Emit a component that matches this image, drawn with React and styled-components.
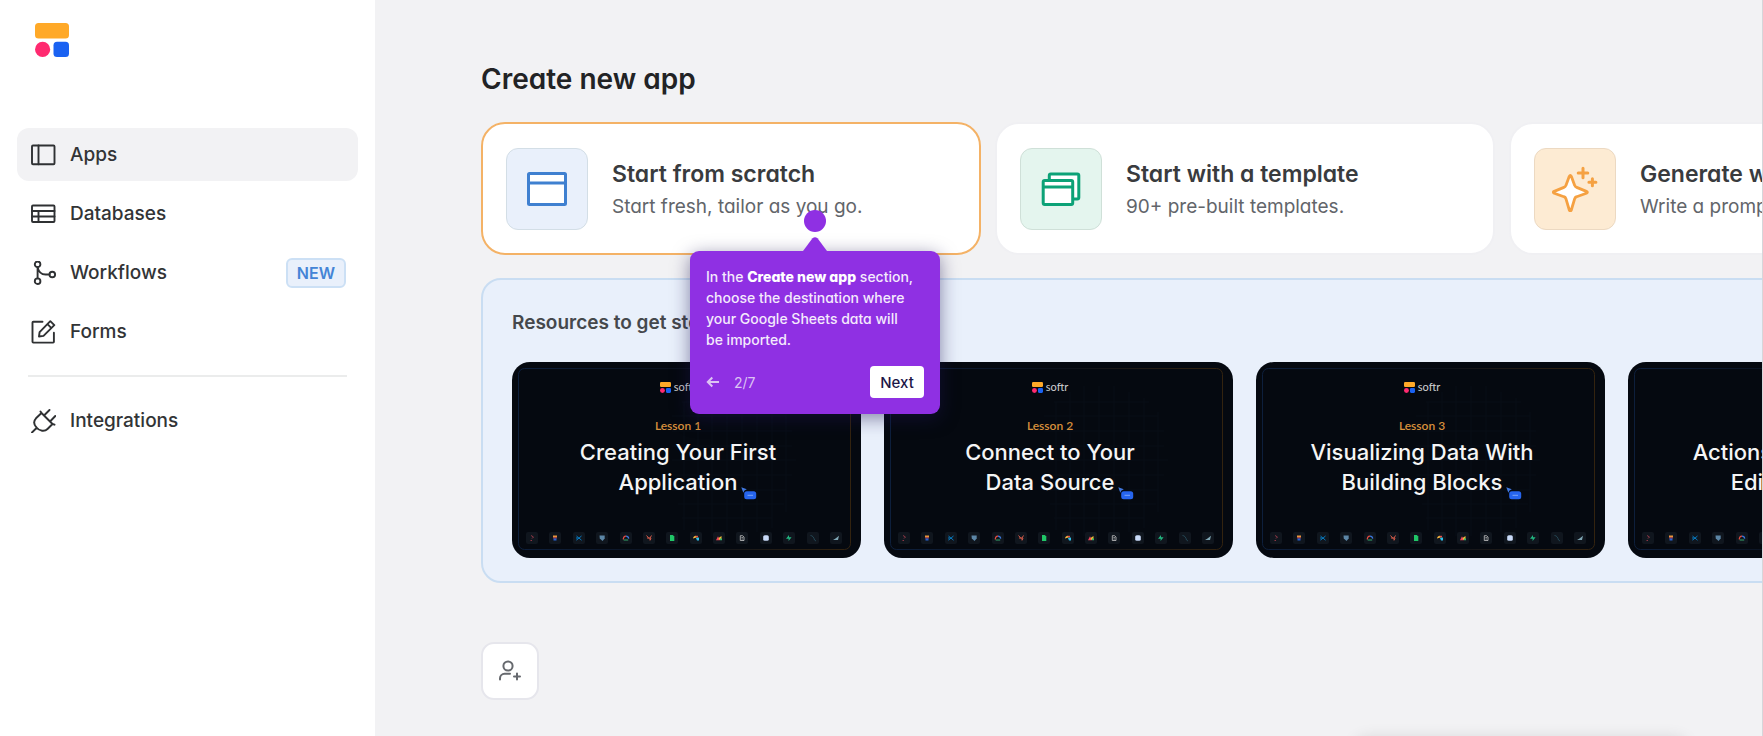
import React from "react";
import styled, { createGlobalStyle } from "styled-components";

const GlobalStyle = createGlobalStyle`
  * {
    box-sizing: border-box;
  }
  body {
    margin: 0;
    background: #f2f2f4;
    font-family: Inter, "Liberation Sans", sans-serif;
    color: #2f3133;
    overflow: hidden;
  }
  button {
    font: inherit;
    color: inherit;
    cursor: pointer;
  }
  svg {
    display: block;
    flex: none;
  }
`;

const Page = styled.div`
  display: flex;
  min-height: 100vh;
  border-right: 1px solid #d6d6da;
`;

const Sidebar = styled.aside`
  flex: none;
  width: 375px;
  padding: 23px 17px 24px;
  background: #fff;
`;

const LogoLink = styled.a`
  display: block;
  width: 34px;
  margin: 0 0 71px 18px;
`;

const Nav = styled.nav`
  display: flex;
  flex-direction: column;
  gap: 6px;
`;

const NavItem = styled.a`
  display: flex;
  align-items: center;
  gap: 14px;
  height: 53px;
  padding: 0 12px 0 14px;
  border-radius: 12px;
  background: ${(p) => (p.$active ? "#f2f2f4" : "transparent")};
  color: #323436;
  font-size: 19px;
  font-weight: 500;
  text-decoration: none;
`;

const Badge = styled.span`
  margin-left: auto;
  padding: 0 9px;
  border: 2px solid #cce0f5;
  border-radius: 6px;
  background: #e9f0fb;
  color: #4484d6;
  font-size: 16px;
  font-weight: 600;
  line-height: 26px;
`;

const Divider = styled.hr`
  width: auto;
  height: 2px;
  margin: 11px;
  border: none;
  background: #ebecec;
`;

const Main = styled.main`
  flex: 1;
  min-width: 0;
  padding: 57px 0 36px 106px;
  overflow: hidden;
  font-feature-settings: "cv11";
`;

const Title = styled.h1`
  margin: 0 0 21px;
  color: #222325;
  font-size: 28px;
  font-weight: 600;
  line-height: 44px;
`;

const StartRow = styled.div`
  display: flex;
  gap: 14px;
  margin-bottom: 23px;
`;

const StartSlot = styled.div`
  position: relative;
  flex: 0 0 500px;
`;

const StartCard = styled.button`
  display: flex;
  align-items: center;
  gap: 24px;
  width: 100%;
  height: 133px;
  padding: 0 23px;
  border: 2px solid ${(p) => (p.$selected ? "#f4b266" : "#f0f0f3")};
  border-radius: 24px;
  background: #fff;
  text-align: left;
`;

const Tile = styled.span`
  display: flex;
  align-items: center;
  justify-content: center;
  flex: none;
  width: 82px;
  height: 82px;
  border: 1px solid ${(p) => p.$line};
  border-radius: 12px;
  background: ${(p) => p.$fill};
`;

const StartText = styled.span`
  display: flex;
  flex-direction: column;
  padding-top: 2px;
  white-space: nowrap;
`;

const StartName = styled.span`
  color: #393b3e;
  font-size: 23px;
  font-weight: 600;
  line-height: 34px;
`;

const StartNote = styled.span`
  color: #62656a;
  font-size: 19px;
  line-height: 32px;
`;

const Resources = styled.section`
  width: 1530px;
  padding: 28px 29px 23px;
  border: 2px solid #c9ddf2;
  border-radius: 20px;
  background: #e9f0fb;
`;

const ResourcesTitle = styled.h2`
  margin: 0 0 24px;
  color: #45484c;
  font-size: 19px;
  font-weight: 600;
  line-height: 30px;
`;

const Lessons = styled.div`
  display: flex;
  gap: 23px;
`;

const Lesson = styled.a`
  position: relative;
  display: flex;
  flex-direction: column;
  flex: 0 0 349px;
  height: 196px;
  padding: 18px 19px 14px 14px;
  border-radius: 18px;
  background: #050910;
  color: #f5f5f5;
  font-feature-settings: normal;
  text-decoration: none;
  overflow: hidden;
`;

const LessonBackdrop = styled.svg`
  position: absolute;
  inset: 0;
`;

const LessonHead = styled.span`
  position: relative;
  display: flex;
  flex-direction: column;
  align-items: center;
  padding-right: 12px;
`;

const Brand = styled.span`
  display: flex;
  align-items: center;
  gap: 3px;
  color: #d0d1d3;
  font-family: Lato, sans-serif;
  font-size: 11px;
  line-height: 14px;
`;

const LessonNumber = styled.span`
  margin-top: 23px;
  color: #d8903c;
  font-family: Lato, sans-serif;
  font-size: 12px;
  font-weight: 600;
  line-height: 18px;
`;

const LessonTitle = styled.strong`
  margin-top: 2px;
  font-size: 22px;
  font-weight: 500;
  line-height: 30px;
  text-align: center;
  white-space: nowrap;
`;

const LastLine = styled.span`
  position: relative;
`;

const Cursor = styled.svg`
  position: absolute;
  left: calc(100% + 4px);
  bottom: -5px;
`;

const Sources = styled.span`
  position: relative;
  display: flex;
  justify-content: space-between;
  margin-top: auto;
`;

const Invite = styled.button`
  display: flex;
  align-items: center;
  justify-content: center;
  width: 58px;
  height: 58px;
  margin-top: 59px;
  padding: 0;
  border: 2px solid #e6e6ec;
  border-radius: 13px;
  background: #fff;
`;

/* bottom panel that sits just under the fold, only its shadow shows */
const Drawer = styled.div`
  position: fixed;
  right: 76px;
  bottom: -42px;
  width: 332px;
  height: 40px;
  border-radius: 12px;
  background: #fff;
  box-shadow: 0 0 16px rgba(0, 0, 0, 0.12);
`;

const Dot = styled.span`
  position: absolute;
  z-index: 3;
  top: 88px;
  left: 323px;
  width: 22px;
  height: 22px;
  border-radius: 50%;
  background: #8f30e3;
`;

const Tip = styled.div`
  position: absolute;
  z-index: 3;
  top: 129px;
  left: 209px;
  width: 250px;
  padding: 15px 16px 16px;
  border-radius: 9px;
  background: #8f30e3;
  box-shadow: 0 4px 18px rgba(26, 20, 80, 0.5);
  color: #f4eafc;
  font-size: 14px;
`;

const TipArrow = styled.svg`
  position: absolute;
  top: -14px;
  left: 113px;
`;

const TipText = styled.p`
  margin: 0;
  font-weight: 500;
  line-height: 21px;
  white-space: nowrap;

  b {
    color: #fff;
    font-weight: 800;
  }
`;

const TipFooter = styled.div`
  display: flex;
  align-items: center;
  margin-top: 16px;
`;

const BackButton = styled.button`
  padding: 0;
  border: none;
  background: none;
`;

const Step = styled.span`
  margin-left: 14px;
  color: #dcc3f3;
`;

const NextButton = styled.button`
  width: 54px;
  height: 32px;
  margin-left: auto;
  padding: 0;
  border: none;
  border-radius: 4px;
  background: #fff;
  color: #1d1647;
  font-size: 15px;
  font-weight: 500;
`;

function SoftrMark({ size }) {
  return (
    <svg width={size} height={size} viewBox="0 0 34 34">
      <rect width="34" height="15.5" rx="3.5" fill="#ffa928" />
      <circle cx="7.6" cy="26.4" r="7.6" fill="#ff2a70" />
      <rect x="18.5" y="18.7" width="15.5" height="15.3" rx="3.5" fill="#1a62f2" />
    </svg>
  );
}

function NavIcon({ children }) {
  return (
    <svg
      width="25"
      height="24"
      viewBox="0 0 25 24"
      fill="none"
      stroke="#2f3133"
      strokeWidth="1.9"
      strokeLinecap="round"
      strokeLinejoin="round"
    >
      {children}
    </svg>
  );
}

const navItems = [
  {
    label: "Apps",
    active: true,
    icon: (
      <>
        <rect x="1" y="2.5" width="22.5" height="18.8" rx="1" />
        <path d="M7.5 2.5v18.8" />
      </>
    ),
  },
  {
    label: "Databases",
    icon: (
      <>
        <rect x="1" y="3.5" width="22.5" height="16.5" rx="1" />
        <path d="M1 9h22.5M1 14.5h22.5M7.5 9v11" />
      </>
    ),
  },
  {
    label: "Workflows",
    badge: "NEW",
    icon: (
      <>
        <circle cx="6.6" cy="3.3" r="2.8" />
        <circle cx="6.6" cy="20.2" r="2.8" />
        <circle cx="21.3" cy="13.5" r="2.8" />
        <path d="M6.6 6.1v11.3M6.6 6.1c.9 4.6 3.7 7.4 8 7.4h3.9" />
      </>
    ),
  },
  {
    label: "Forms",
    icon: (
      <path d="M11.5 1.8H2.3a.8.8 0 0 0-.8.8v19.2a.8.8 0 0 0 .8.8h19.8a.8.8 0 0 0 .8-.8v-9M8 16.5l.6-4.4L19.3 1.2l4 4-10.8 10.7zM16.5 4.2l3.9 3.9" />
    ),
  },
];

const startCards = [
  {
    name: "Start from scratch",
    note: "Start fresh, tailor as you go.",
    fill: "#e9f0fb",
    line: "#d3dee6",
    icon: (
      <svg width="40" height="34" viewBox="0 0 40 34" fill="#fff" stroke="#3f80d0" strokeWidth="3" strokeLinejoin="round">
        <rect x="1.5" y="1.5" width="37" height="31" rx="1" />
        <path d="M2 11h36" />
      </svg>
    ),
  },
  {
    name: "Start with a template",
    note: "90+ pre-built templates.",
    fill: "#e4f5ee",
    line: "#cfe0d8",
    icon: (
      <svg width="40" height="34" viewBox="0 0 40 34" fill="#fff" stroke="#0ca277" strokeWidth="3" strokeLinejoin="round">
        <rect x="8.3" y="2" width="29.5" height="25" rx="1.5" />
        <rect x="2.2" y="8.5" width="29.5" height="24" rx="1.5" />
        <path d="M2.2 15h29.5" />
      </svg>
    ),
  },
  {
    name: "Generate with AI",
    note: "Write a prompt, get an app.",
    fill: "#fdebd3",
    line: "#ecd9c2",
    icon: (
      <svg width="46" height="46" viewBox="0 0 46 46" fill="#fff" stroke="#f5a142" strokeWidth="2.8" strokeLinecap="round" strokeLinejoin="round">
        <path d="M17.3 10.3q1-2 2 0l3.4 9.1q.5 1.5 2 2l9.7 4q2 .8 0 1.8l-9.7 3.500q-1.500.5-2 2l-3.400 11.300q-1 2-2 0l-3.400-11.300q-.5-1.500-2-2l-9.700-3.500q-2-1 0-1.800l9.700-4q1.500-.5 2-2z" />
        <path d="M31 2.3v9.5M26.2 7h9.6M40.4 12.8v7M36.9 16.3h7" strokeWidth="3" />
      </svg>
    ),
  },
];

const lessons = [
  ["Creating Your First", "Application"],
  ["Connect to Your", "Data Source"],
  ["Visualizing Data With", "Building Blocks"],
  ["Actions, Forms and", "Editing Data"],
];

// data source glyphs, each drawn on a 12px dark chip
const sources = [
  <path d="M5 3.5l2.500 1.500L6 6.500M4.500 8.500h1.500" stroke="#8c3745" fill="none" />,
  <>
    <path d="M4 3.5h4v2H4z" fill="#e8963b" />
    <path d="M4.3 5.5h3.4v1H4.3z" fill="#d7416c" />
    <path d="M4.5 6.5h3v2h-3z" fill="#2863d0" />
  </>,
  <path d="M3.5 4l5 4.2M8.5 4l-5 4.2M4 5v2.5" stroke="#0878bd" fill="none" />,
  <path d="M3.5 3.5h5.2v3L6.5 9 3.8 6.5z" fill="#5c86a6" />,
  <>
    <path d="M3.5 7.5a2.5 2.5 0 0 1 2.5-3.3" stroke="#e34c43" strokeWidth="1.3" fill="none" />
    <path d="M6 4.2c1.5 0 2.5 1 2.7 2.5" stroke="#3b77db" strokeWidth="1.3" fill="none" />
    <path d="M3.7 8h4.5" stroke="#35a56a" fill="none" />
  </>,
  <path d="M3.5 3.5l4 4.5M8.5 3.5L7 6M4 6h4l-1 2.5" stroke="#d15a49" fill="none" />,
  <path d="M4 3h2.8l1.5 1.5V9H4z" fill="#20c667" />,
  <>
    <path d="M3 6.5c.5-3 3.500-3.500 5-1.500z" fill="#f5b83d" />
    <path d="M5 4l3-.2v2z" fill="#e4484d" />
    <path d="M6 6l3-.5v3H7z" fill="#2fc0e9" />
  </>,
  <>
    <path d="M3 8.2l2-4 2 4z" fill="#e9445a" />
    <path d="M5.5 6l3-2v4h-2z" fill="#f3bd34" />
    <path d="M7 6.5h2v1.7H7z" fill="#34b36c" />
  </>,
  <path d="M4.3 3.7h2.2L8 5v3.5H4.3zM5.5 5.5h1.3M5.5 7h1.3" stroke="#c8c8c8" strokeWidth=".8" fill="none" />,
  <rect x="3.2" y="3.2" width="5.6" height="5.6" rx="1.6" fill="#c9daf8" />,
  <path d="M6 3L3 6.8h2.6V9l3-3.8H6z" fill="#22b680" />,
  <path d="M3.5 3.5c2 0 3.5 2 4 4.5L9 9" stroke="#28505f" strokeWidth=".8" fill="none" />,
  <path d="M3 8l2.5-1.5L9 3.7 8 8z" fill="#7fa6b4" />,
];

function LessonCard({ number, lines }) {
  return (
    <Lesson href="#lesson">
      <LessonBackdrop width="349" height="196" fill="none">
        <defs>
          <linearGradient id={`edge${number}`}>
            <stop offset="0" stopColor="#0d1f3c" />
            <stop offset="0.5" stopColor="#0b111c" />
            <stop offset="1" stopColor="#33230f" />
          </linearGradient>
        </defs>
        <path d="M172 40v128M186 30v140M200 24v150M215 24v150M230 24v150M245 30v140M260 36v130M274 50v100M170 40h95M160 54h114M160 69h120M160 84h120M160 98h124M160 113h120M160 128h114M166 142h106M170 156h90" stroke="#090e16" />
        <rect x="6.5" y="6.5" width="332" height="181" rx="6" stroke={`url(#edge${number})`} />
      </LessonBackdrop>
      <LessonHead>
        <Brand>
          <SoftrMark size={11} />
          softr
        </Brand>
        <LessonNumber>Lesson {number}</LessonNumber>
        <LessonTitle>
          {lines[0]}
          <br />
          <LastLine>
            {lines[1]}
            <Cursor width="16" height="13" viewBox="0 0 16 13">
              <path d="M.3.3l5.5 2-2.3 1.2-1.2 2.2z" fill="#4078e0" />
              <rect x="3.2" y="4.3" width="12" height="8" rx="2.5" fill="#2665ee" />
              <path d="M6.5 8.3H12" stroke="#7da5f6" />
            </Cursor>
          </LastLine>
        </LessonTitle>
      </LessonHead>
      <Sources>
        {sources.map((glyph, i) => (
          <svg key={i} width="12" height="12" viewBox="0 0 12 12">
            <rect width="12" height="12" rx="2" fill="#10161e" />
            {glyph}
          </svg>
        ))}
      </Sources>
    </Lesson>
  );
}

function TourTip() {
  return (
    <>
      <Dot />
      <Tip role="dialog" aria-label="Product tour">
        <TipArrow width="24" height="15" viewBox="0 0 24 15">
          <path d="M0 15V14L9.5 1.3Q12-1 14.5 1.3L24 14v1z" fill="#8f30e3" />
        </TipArrow>
        <TipText>
          In the <b>Create new app</b> section,
          <br />
          choose the destination where
          <br />
          your Google Sheets data will
          <br />
          be imported.
        </TipText>
        <TipFooter>
          <BackButton aria-label="Back">
            <svg width="14" height="12" viewBox="0 0 14 12" fill="none" stroke="#dcc3f3" strokeWidth="2">
              <path d="M13 6H1.8M6.3 1.5L1.8 6l4.5 4.5" />
            </svg>
          </BackButton>
          <Step>2/7</Step>
          <NextButton>Next</NextButton>
        </TipFooter>
      </Tip>
    </>
  );
}

export default function App() {
  return (
    <>
      <GlobalStyle />
      <Page>
        <Sidebar>
          <LogoLink href="#home" aria-label="Softr">
            <SoftrMark size={34} />
          </LogoLink>
          <Nav>
            {navItems.map((item) => (
              <NavItem key={item.label} href="#nav" $active={item.active}>
                <NavIcon>{item.icon}</NavIcon>
                {item.label}
                {item.badge && <Badge>{item.badge}</Badge>}
              </NavItem>
            ))}
            <Divider />
            <NavItem href="#integrations">
              <NavIcon>
                <path d="M1 23.5L5.5 19M5.5 18.5C2.8 15.5 2.5 12 5 9.3L10.5 4l11 11-5 5c-2.8 2.8-8 2.3-11-1.5zM10.5 4L9.500 2.500M14 5.500L18.500 1M20 11.500L24.300 7M21.500 15l2 .7" />
              </NavIcon>
              Integrations
            </NavItem>
          </Nav>
        </Sidebar>
        <Main>
          <Title>Create new app</Title>
          <StartRow>
            {startCards.map((card, i) => (
              <StartSlot key={card.name}>
                <StartCard $selected={i === 0}>
                  <Tile $fill={card.fill} $line={card.line}>
                    {card.icon}
                  </Tile>
                  <StartText>
                    <StartName>{card.name}</StartName>
                    <StartNote>{card.note}</StartNote>
                  </StartText>
                </StartCard>
                {i === 0 && <TourTip />}
              </StartSlot>
            ))}
          </StartRow>
          <Resources>
            <ResourcesTitle>Resources to get started</ResourcesTitle>
            <Lessons>
              {lessons.map((lines, i) => (
                <LessonCard key={lines[0]} number={i + 1} lines={lines} />
              ))}
            </Lessons>
          </Resources>
          <Invite aria-label="Invite user">
            <svg width="24" height="24" viewBox="0 0 24 24" fill="none" stroke="#66696e" strokeWidth="2" strokeLinecap="round">
              <circle cx="10" cy="7" r="4.6" />
              <path d="M2 20.5v-1.2a4.5 4.5 0 0 1 4.5-4.5H12M19 14.5v6M16 17.5h6" />
            </svg>
          </Invite>
        </Main>
      </Page>
      <Drawer />
    </>
  );
}
